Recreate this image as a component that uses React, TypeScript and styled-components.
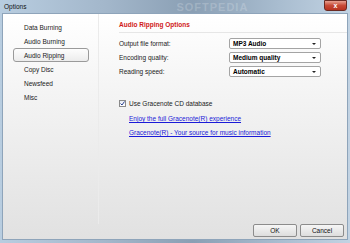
import React, { useState } from 'react';
import styled, { createGlobalStyle } from 'styled-components';

const GlobalStyle = createGlobalStyle`
  html, body {
    margin: 0;
    padding: 0;
    background: #6d8aa6;
  }
  body {
    font-family: 'Liberation Sans', Arial, sans-serif;
  }
`;

const Frame = styled.div`
  box-sizing: border-box;
  display: flex;
  flex-direction: column;
  height: 243px;
  width: 350px;
  padding: 0 2px 3px 2px;
  background: linear-gradient(90deg, #b8cde0 0%, #a3b7cb 30%, #8a9fb4 55%, #a9bdd0 80%, #c2d3e3 100%);
`;

const TitleBar = styled.div`
  align-items: center;
  display: flex;
  height: 13px;
`;

const Title = styled.span`
  color: #111;
  font-size: 6.5px;
  padding-left: 2px;
`;

const Watermark = styled.span`
  color: rgba(255, 255, 255, 0.2);
  font-size: 11px;
  font-weight: bold;
  letter-spacing: 1px;
  margin-left: 150px;
`;

const CloseButton = styled.button`
  align-items: center;
  align-self: flex-start;
  background: linear-gradient(#e8a090, #c74a36 50%, #b8321f);
  border: 1px solid #6b2a22;
  border-radius: 0 0 3px 3px;
  color: #fff;
  display: flex;
  font-size: 7px;
  font-weight: bold;
  height: 11px;
  justify-content: center;
  margin-left: auto;
  margin-right: 1px;
  padding: 0;
  width: 23px;
`;

const Client = styled.div`
  background: linear-gradient(#ffffff 0%, #f4f4f4 35%, #e1e1e1 100%);
  border: 1px solid #8ea4ba;
  display: flex;
  flex: 1;
  flex-direction: column;
`;

const Body = styled.div`
  display: flex;
  flex: 1;
`;

const Sidebar = styled.nav`
  border-right: 1px solid #ebebeb;
  display: flex;
  flex-direction: column;
  padding-top: 6px;
  width: 95px;
`;

const NavItem = styled.div<{ selected?: boolean }>`
  align-items: center;
  background: ${props => (props.selected ? 'linear-gradient(#fdfdfd, #ececec)' : 'transparent')};
  border: 1px solid ${props => (props.selected ? '#9a9a9a' : 'transparent')};
  border-radius: 3px;
  box-sizing: border-box;
  color: #1a1a1a;
  display: flex;
  font-size: 6.5px;
  height: 14px;
  margin: 0 9px 0 10px;
  padding-left: 10px;
`;

const Main = styled.section`
  display: flex;
  flex: 1;
  flex-direction: column;
  padding: 7px 26px 0 20px;
`;

const Heading = styled.div`
  border-bottom: 1px solid #e6e6e6;
  color: #d01818;
  font-size: 6.5px;
  font-weight: bold;
  margin-right: -26px;
  padding-bottom: 4px;
`;

const Settings = styled.div`
  display: grid;
  grid-template-columns: 1fr 92px;
  margin-top: 5px;
  row-gap: 3px;
`;

const Label = styled.span`
  align-self: center;
  color: #1a1a1a;
  font-size: 6.5px;
`;

const Select = styled.div`
  align-items: center;
  background: #fff;
  border: 1px solid #a4a4a4;
  border-radius: 2px;
  box-sizing: border-box;
  color: #000;
  display: flex;
  font-size: 6.5px;
  font-weight: bold;
  height: 11px;
  justify-content: space-between;
  padding: 0 4px 0 3px;
`;

const Arrow = styled.span`
  border-left: 2px solid transparent;
  border-right: 2px solid transparent;
  border-top: 2px solid #222;
  height: 0;
  width: 0;
`;

const CheckRow = styled.label`
  align-items: center;
  color: #1a1a1a;
  display: flex;
  font-size: 6.5px;
  gap: 3px;
  margin-top: 23px;
`;

const CheckBox = styled.span`
  align-items: center;
  background: linear-gradient(#e8eef5, #ffffff);
  border: 1px solid #8a8a8a;
  box-sizing: border-box;
  display: flex;
  height: 7px;
  justify-content: center;
  width: 7px;
`;

const Links = styled.div`
  display: flex;
  flex-direction: column;
  gap: 7px;
  margin-top: 8px;
  padding-left: 10px;
`;

const Link = styled.a`
  color: #1a1ad8;
  font-size: 6.5px;
  text-decoration: underline;
  white-space: nowrap;
`;

const Footer = styled.div`
  display: flex;
  gap: 3px;
  justify-content: flex-end;
  padding: 0 3px 2px 0;
`;

const Button = styled.button`
  background: linear-gradient(#f6f6f6, #dddddd);
  border: 1px solid #8c8c8c;
  border-radius: 2px;
  color: #111;
  font-family: 'Liberation Sans', Arial, sans-serif;
  font-size: 6.5px;
  height: 13px;
  padding: 0;
  width: 44px;
`;

const navItems = ['Data Burning', 'Audio Burning', 'Audio Ripping', 'Copy Disc', 'Newsfeed', 'Misc'];

const settings = [
  { label: 'Output file format:', value: 'MP3 Audio' },
  { label: 'Encoding quality:', value: 'Medium quality' },
  { label: 'Reading speed:', value: 'Automatic' }
];

const App: React.FC = () => {
  const [selected, setSelected] = useState<number>(2);

  return (
    <>
      <GlobalStyle />
      <Frame>
        <TitleBar>
          <Title>Options</Title>
          <Watermark>SOFTPEDIA</Watermark>
          <CloseButton>x</CloseButton>
        </TitleBar>
        <Client>
          <Body>
            <Sidebar>
              {navItems.map((item, i) => (
                <NavItem key={item} selected={i === selected} onClick={() => setSelected(i)}>
                  {item}
                </NavItem>
              ))}
            </Sidebar>
            <Main>
              <Heading>Audio Ripping Options</Heading>
              <Settings>
                {settings.map(s => (
                  <React.Fragment key={s.label}>
                    <Label>{s.label}</Label>
                    <Select>
                      {s.value}
                      <Arrow />
                    </Select>
                  </React.Fragment>
                ))}
              </Settings>
              <CheckRow>
                <CheckBox>
                  <svg width="5" height="5" viewBox="0 0 5 5">
                    <path d="M0.5 2.5 L2 4 L4.5 0.5" stroke="#2a3f8f" strokeWidth="1" fill="none" />
                  </svg>
                </CheckBox>
                Use Gracenote CD database
              </CheckRow>
              <Links>
                <Link>Enjoy the full Gracenote(R) experience</Link>
                <Link>Gracenote(R) - Your source for music information</Link>
              </Links>
            </Main>
          </Body>
          <Footer>
            <Button>OK</Button>
            <Button>Cancel</Button>
          </Footer>
        </Client>
      </Frame>
    </>
  );
};

export default App;
